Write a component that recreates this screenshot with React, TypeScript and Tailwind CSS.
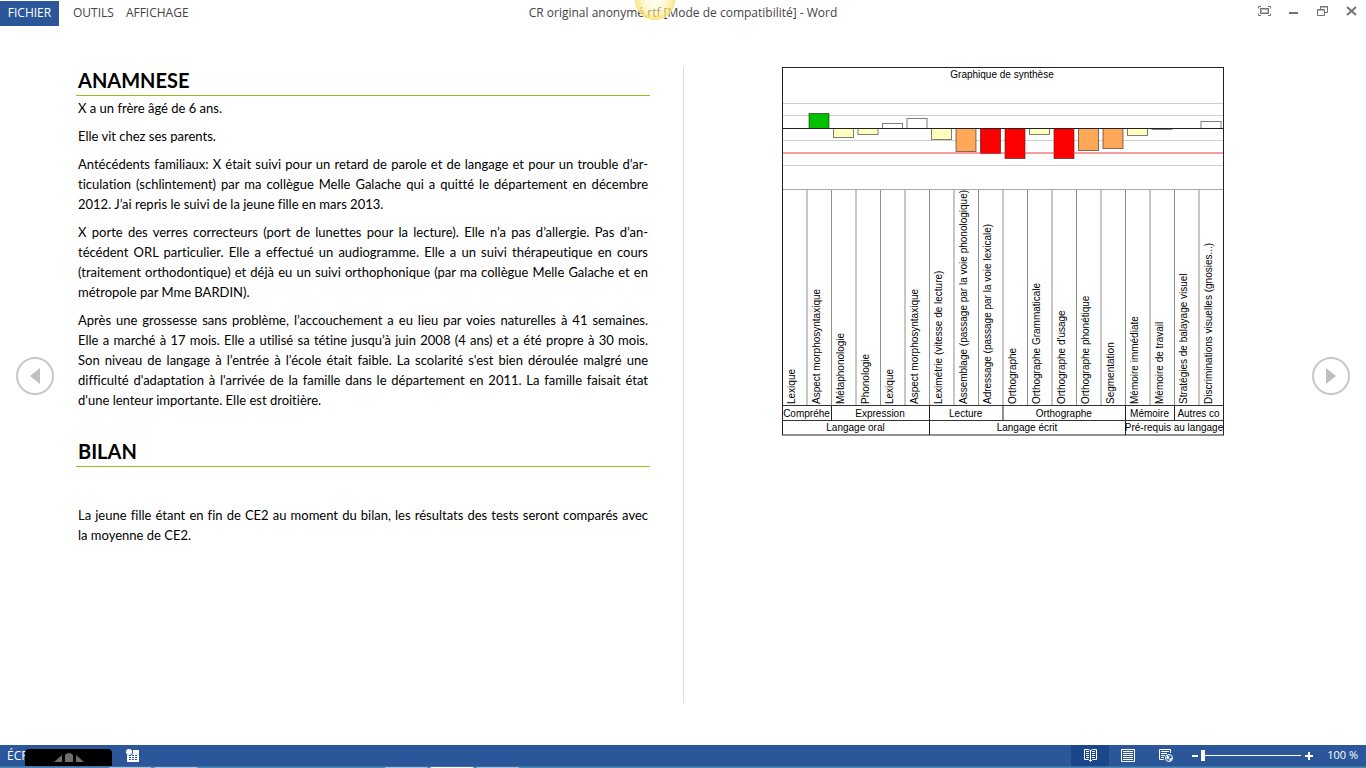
import { useState } from 'react';

type Bar = { label: string; value: number; color: string };

// value is the bar height in chart units, positive above the base line
const bars: Bar[] = [
  { label: 'Lexique', value: 0, color: '#ffffff' },
  { label: 'Aspect morphosyntaxique', value: 15, color: '#00c000' },
  { label: 'Métaphonologie', value: -9, color: '#ffffc0' },
  { label: 'Phonologie', value: -6, color: '#ffffc0' },
  { label: 'Lexique', value: 5, color: '#ffffff' },
  { label: 'Aspect morphosyntaxique', value: 10, color: '#ffffff' },
  { label: 'Leximétrie (vitesse de lecture)', value: -11, color: '#ffffc0' },
  { label: 'Assemblage (passage par la voie phonologique)', value: -23, color: '#ffa858' },
  { label: 'Adressage (passage par la voie lexicale)', value: -25, color: '#ff0000' },
  { label: 'Orthographe', value: -30, color: '#ff0000' },
  { label: 'Orthographe Grammaticale', value: -6, color: '#ffffc0' },
  { label: "Orthographe d'usage", value: -30, color: '#ff0000' },
  { label: 'Orthographe phonétique', value: -22, color: '#ffa858' },
  { label: 'Segmentation', value: -20, color: '#ffa858' },
  { label: 'Mémoire immédiate', value: -7, color: '#ffffc0' },
  { label: 'Mémoire de travail', value: -1, color: '#ffffff' },
  { label: 'Stratégies de balayage visuel', value: 0, color: '#ffffff' },
  { label: 'Discriminations visuelles (gnosies...)', value: 7, color: '#ffffff' },
];

const groups = [
  { label: 'Compréhe', from: 0, to: 2 },
  { label: 'Expression', from: 2, to: 6 },
  { label: 'Lecture', from: 6, to: 9 },
  { label: 'Orthographe', from: 9, to: 14 },
  { label: 'Mémoire', from: 14, to: 16 },
  { label: 'Autres co', from: 16, to: 18 },
];

const domains = [
  { label: 'Langage oral', from: 0, to: 6 },
  { label: 'Langage écrit', from: 6, to: 14 },
  { label: 'Pré-requis au langage', from: 14, to: 18 },
];

const COL = 24.5;
const BASE = 61.5;

const paragraphs = [
  ['X a un frère âgé de 6 ans.'],
  ['Elle vit chez ses parents.'],
  [
    'Antécédents familiaux: X était suivi pour un retard de parole et de langage et pour un trouble d’ar-',
    'ticulation (schlintement) par ma collègue Melle Galache qui a quitté le département en décembre',
    '2012. J’ai repris le suivi de la jeune fille en mars 2013.',
  ],
  [
    'X porte des verres correcteurs (port de lunettes pour la lecture). Elle n’a pas d’allergie. Pas d’an-',
    'técédent ORL particulier. Elle a effectué un audiogramme. Elle a un suivi thérapeutique en cours',
    '(traitement orthodontique) et déjà eu un suivi orthophonique (par ma collègue Melle Galache et en',
    'métropole par Mme BARDIN).',
  ],
  [
    'Après une grossesse sans problème, l’accouchement a eu lieu par voies naturelles à 41 semaines.',
    'Elle a marché à 17 mois. Elle a utilisé sa tétine jusqu’à juin 2008 (4 ans) et a été propre à 30 mois.',
    "Son niveau de langage à l’entrée à l’école était faible. La scolarité s'est bien déroulée malgré une",
    "difficulté d'adaptation à l'arrivée de la famille dans le département en 2011. La famille faisait état",
    "d'une lenteur importante. Elle est droitière.",
  ],
];

const bilan = [
  'La jeune fille étant en fin de CE2 au moment du bilan, les résultats des tests seront comparés avec',
  'la moyenne de CE2.',
];

function Paragraph({ lines }: { lines: string[] }) {
  return (
    <p className="px-[2px] mb-2 text-[13px] leading-5">
      {lines.map((line, i) => (
        <span
          key={i}
          className={i < lines.length - 1 ? 'block text-justify [text-align-last:justify]' : 'block'}
        >
          {line}{' '}
        </span>
      ))}
    </p>
  );
}

function Heading({ children }: { children: string }) {
  return (
    <h2 className="h-[29px] px-[2px] border-b border-[#8fc31f] text-[20px] leading-[26px] font-bold">{children}</h2>
  );
}

function SynthesisChart() {
  return (
    <svg
      viewBox="0 0 442 369"
      className="w-full block"
      fontFamily='"Liberation Sans", Arial, sans-serif'
      fontSize="10"
      fill="#000"
      role="img"
      aria-label="Graphique de synthèse"
    >
      <text x="220" y="11" textAnchor="middle">Graphique de synthèse</text>

      {/* Grid */}
      {[36, 48, 73, 98].map((y) => (
        <line key={y} x1="0" x2="442" y1={y + 0.5} y2={y + 0.5} stroke="#cfcfcf" />
      ))}
      <line x1="0" x2="442" y1="122.5" y2="122.5" stroke="#a8a8a8" />

      {/* Bars */}
      {bars.map((b, i) =>
        b.value === 0 ? null : (
          <rect
            key={i}
            x={i * COL + 2.5}
            y={b.value > 0 ? BASE - b.value : BASE}
            width="20"
            height={Math.abs(b.value)}
            fill={b.color}
            stroke="#000"
            strokeOpacity="0.5"
          />
        )
      )}
      <line x1="0" x2="442" y1="86" y2="86" stroke="#f04040" />
      {bars.map((b, i) =>
        b.value < -24 ? (
          <rect key={i} x={i * COL + 3} y="62" width="19" height={-b.value - 1} fill={b.color} />
        ) : null
      )}
      <line x1="0" x2="442" y1={BASE} y2={BASE} stroke="#222" />

      {/* Column labels */}
      {bars.map((b, i) => (
        <g key={i}>
          {i > 0 && <line x1={i * COL + 0.5} x2={i * COL + 0.5} y1="123" y2="339" stroke="#909090" />}
          <text transform={`translate(${i * COL + 13} 337) rotate(-90)`}>{b.label}</text>
        </g>
      ))}

      {/* Groups */}
      {groups.map((g) => (
        <g key={g.label}>
          {g.from > 0 && (
            <line x1={g.from * COL + 0.5} x2={g.from * COL + 0.5} y1="339" y2="353" stroke="#222" />
          )}
          <text x={((g.from + g.to) * COL) / 2} y="350" textAnchor="middle">{g.label}</text>
        </g>
      ))}
      {domains.map((d) => (
        <g key={d.label}>
          {d.from > 0 && (
            <line x1={d.from * COL + 0.5} x2={d.from * COL + 0.5} y1="353" y2="368" stroke="#222" />
          )}
          <text x={((d.from + d.to) * COL) / 2} y="364" textAnchor="middle">{d.label}</text>
        </g>
      ))}
      <line x1="0" x2="442" y1="338.5" y2="338.5" stroke="#333" />
      <line x1="0" x2="442" y1="353.5" y2="353.5" stroke="#333" />
      <rect x="0.5" y="0.5" width="441" height="367.5" fill="none" stroke="#222" />
    </svg>
  );
}

function PageButton({ direction }: { direction: 'prev' | 'next' }) {
  return (
    <button
      aria-label={direction === 'prev' ? 'Page précédente' : 'Page suivante'}
      className="w-[38px] h-[38px] rounded-full border-2 border-[#c8c8c8] flex items-center justify-center shrink-0"
    >
      <svg viewBox="0 0 12 16" className="w-3 h-4" fill="#bfbfbf">
        <path d={direction === 'prev' ? 'M1 8L11 0v16z' : 'M11 8L1 0v16z'} />
      </svg>
    </button>
  );
}

export default function App() {
  const [zoom, setZoom] = useState(0);

  return (
    <div className="min-h-screen flex flex-col bg-white text-black font-['Lato',sans-serif] [font-variant-ligatures:none]">
      {/* Title bar */}
      <header className="relative h-[25px] grid grid-cols-[1fr_auto_1fr] text-xs text-[#444] font-['Open_Sans',sans-serif]">
        <nav className="flex items-center">
          <button className="h-[25px] w-[59px] bg-[#2b579a] text-white">FICHIER</button>
          <button className="ml-[14px]">OUTILS</button>
          <button className="ml-3">AFFICHAGE</button>
        </nav>
        <h1 className="leading-[26px]">CR original anonymé.rtf [Mode de compatibilité] - Word</h1>
        <div className="flex items-start justify-end pt-[5px] pr-2 gap-4 text-[#737373]">
          <button aria-label="Masquer la barre d'outils">
            <svg viewBox="0 0 13 12" className="w-[13px] h-3" fill="none" stroke="currentColor">
              <path d="M.5 3.500V1.500H3M10 1.500h2.500v2M.5 8.500v2H3M10 10.500h2.500v-2" />
              <rect x="2.500" y="3.500" width="8" height="5" />
              <rect x="3.500" y="4.500" width="6" height="3" stroke="#b8b8b8" />
            </svg>
          </button>
          <button aria-label="Réduire">
            <svg viewBox="0 0 13 12" className="w-[13px] h-3" fill="currentColor">
              <path d="M2 7h9v2H2z" />
            </svg>
          </button>
          <button aria-label="Restaurer">
            <svg viewBox="0 0 13 12" className="w-[13px] h-3" fill="none" stroke="currentColor">
              <path d="M1.500 4.500h7v6h-7zM1 5h8M4.500 4V1.500h7v6H9M4 2h8" />
            </svg>
          </button>
          <button aria-label="Fermer">
            <svg viewBox="0 0 13 12" className="w-[13px] h-3" fill="none" stroke="currentColor" strokeWidth="2">
              <path d="M2 2l9 8M11 2l-9 8" />
            </svg>
          </button>
        </div>
        <div className="absolute left-[635px] top-0 w-10 h-5 overflow-hidden">
          <div className="-mt-5 w-10 h-10 rounded-full border border-[#f5e08a]/70 bg-[radial-gradient(circle,rgba(255,253,225,0.55)_20%,rgba(253,238,150,0.55)_50%,rgba(255,225,110,0.8)_70%)]" />
        </div>
      </header>

      {/* Reading view */}
      <main className="flex-1 flex">
        <div className="w-[76px] pl-4 pb-[18px] flex items-center shrink-0">
          <PageButton direction="prev" />
        </div>
        <div className="flex-1 min-w-0 grid grid-cols-2 py-[42px]">
          <article className="min-w-0 pr-[33px]">
            <Heading>ANAMNESE</Heading>
            <div className="pt-[2px] pb-5">
              {paragraphs.map((lines, i) => (
                <Paragraph key={i} lines={lines} />
              ))}
            </div>
            <Heading>BILAN</Heading>
            <div className="pt-[38px]">
              <Paragraph lines={bilan} />
            </div>
          </article>
          <section className="min-w-0 border-l border-[#dcdcdc] pl-[98px] pr-[66px]">
            <SynthesisChart />
          </section>
        </div>
        <div className="w-[76px] pr-4 pb-[18px] flex items-center justify-end shrink-0">
          <PageButton direction="next" />
        </div>
      </main>

      {/* Status bar */}
      <footer className="text-white text-xs font-['Open_Sans',sans-serif]">
        <div className="h-[21px] bg-[#2b579a] flex items-center">
          <span className="w-[18px] ml-[7px]">ÉCR</span>
          <div className="relative self-end w-[87px] h-[17px] bg-black rounded-t flex items-end justify-center pb-1">
            <svg viewBox="0 0 30 9" className="w-[30px] h-[9px]" fill="#6e6e6e">
              <path d="M0 9L8 2v7zM11 9V2q4-4 8 0v7zM22 2l8 7h-8z" />
            </svg>
          </div>
          <button aria-label="Macro" className="ml-[14px]">
            <svg viewBox="0 0 13 13" className="w-[13px] h-[13px]">
              <path d="M3 1h10v12H1V5" fill="#fff" />
              <path d="M3 6h2v1H3zM6 6h2v1H6zM9 6h2v1H9zM3 8h2v1H3zM6 8h2v1H6zM9 8h2v1H9zM3 10h2v1H3zM6 10h2v1H6zM9 10h2v1H9z" fill="#2b579a" />
              <circle cx="3.500" cy="3" r="3.500" fill="#2b579a" />
              <circle cx="3" cy="3" r="3" fill="#fff" />
            </svg>
          </button>
          <div className="ml-auto flex items-center h-full">
            <button aria-label="Mode Lecture" className="w-[38px] h-full bg-[#19478a] flex items-center justify-center">
              <svg viewBox="0 0 13 13" className="w-[13px] h-[13px]" fill="none" stroke="#fff">
                <path d="M.5 .5h4l2 1 2-1h4v10h-4l-2 2-2-2h-4zM6.500 1v11M2 2.500h3M2 4.500h3M2 6.500h3M2 8.500h3M8 2.500h3M8 4.500h3M8 6.500h3M8 8.500h3" />
              </svg>
            </button>
            <button aria-label="Page" className="w-[38px] flex justify-center">
              <svg viewBox="0 0 14 13" className="w-[14px] h-[13px]" fill="none" stroke="#fff">
                <path d="M.5 .5h13v12H.5zM2 2.500h10M2 4.500h10M2 6.500h10M2 8.500h10M2 10.500h10" />
              </svg>
            </button>
            <button aria-label="Web" className="w-[38px] flex justify-center">
              <svg viewBox="0 0 14 13" className="w-[14px] h-[13px]" fill="none" stroke="#fff">
                <path d="M5 10.500H.5V.5h11V4M2 2.500h8M2 4.500h6M2 6.500h4M2 8.500h3" />
                <circle cx="10" cy="9" r="3.500" fill="#2b579a" />
                <path d="M8 6.500l2 1v2l-2 .5zM10.500 10l2-1v2l-1.500 1z" fill="#fff" strokeWidth=".5" />
              </svg>
            </button>
            <button aria-label="Zoom arrière" className="ml-1 w-3 flex justify-center">
              <svg viewBox="0 0 8 8" className="w-2 h-2" fill="#fff">
                <path d="M1 3h6v2H1z" />
              </svg>
            </button>
            <input
              type="range"
              aria-label="Zoom"
              min={0}
              max={100}
              value={zoom}
              onChange={(e) => setZoom(Number(e.target.value))}
              className="w-[100px] h-3 appearance-none bg-[linear-gradient(#fff,#fff)] bg-[length:100%_1px] bg-center bg-no-repeat [&::-webkit-slider-thumb]:appearance-none [&::-webkit-slider-thumb]:w-1 [&::-webkit-slider-thumb]:h-[11px] [&::-webkit-slider-thumb]:bg-white"
            />
            <button aria-label="Zoom avant" className="ml-1 w-2">
              <svg viewBox="0 0 8 8" className="w-2 h-2" fill="#fff">
                <path d="M0 3h3V0h2v3h3v2H5v3H3V5H0z" />
              </svg>
            </button>
            <span className="w-[53px] pr-2 text-right text-[11px]">100 %</span>
          </div>
        </div>
        {/* Top edge of the taskbar */}
        <div className="h-[2px] border-t border-[#3a6ea5] bg-[#4f87b5] flex gap-1 pl-[109px]">
          <div className="w-[42px] bg-[#a9c0d6]" />
          <div className="w-[42px] bg-[#a9c0d6]" />
          <div className="w-[42px] ml-[184px] bg-[#a9c0d6]" />
          <div className="w-[42px] bg-white" />
          <div className="w-[42px] bg-[#a9c0d6]" />
        </div>
      </footer>
    </div>
  );
}
